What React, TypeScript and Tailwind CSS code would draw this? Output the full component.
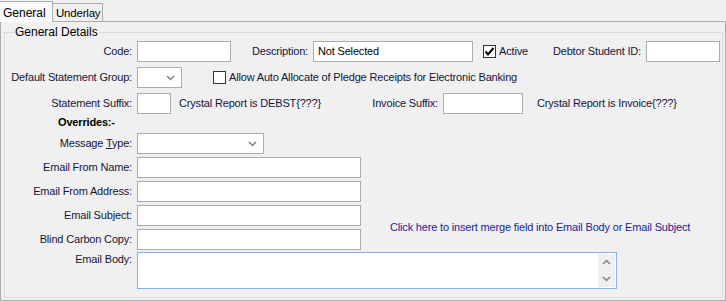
import React from 'react';

const font = { fontFamily: '"Liberation Sans", Arial, sans-serif' };

function Chevron({ className = '' }: { className?: string }) {
  return (
    <svg width="9" height="6" viewBox="0 0 9 6" className={className}>
      <polyline points="1,1 4.5,4.5 8,1" fill="none" stroke="#808080" strokeWidth="1.5" />
    </svg>
  );
}

function Label({ w, children }: { w: string; children: React.ReactNode }) {
  return <div className={`${w} shrink-0 text-right pr-[5px] text-[#14143a]`}>{children}</div>;
}

function TextBox({ w, value = '' }: { w: string; value?: string }) {
  return (
    <div className={`${w} h-[21px] shrink-0 border border-[#acacac] bg-white px-[4px] leading-[19px] text-black`}>
      {value}
    </div>
  );
}

function Select({ w }: { w: string }) {
  return (
    <div className={`${w} h-[21px] shrink-0 border border-[#acacac] bg-white flex items-center justify-end pr-[6px]`}>
      <Chevron />
    </div>
  );
}

function CheckBox({ checked }: { checked?: boolean }) {
  return (
    <div className="w-[13px] h-[13px] shrink-0 border border-[#333333] bg-white flex items-center justify-center">
      {checked && (
        <svg width="11" height="11" viewBox="0 0 11 11">
          <polyline points="1.5,5.5 4,8.5 9.5,2" fill="none" stroke="#000" strokeWidth="2" />
        </svg>
      )}
    </div>
  );
}

function Row({ children, mt }: { children: React.ReactNode; mt: string }) {
  return <div className={`flex items-center h-[21px] ${mt}`}>{children}</div>;
}

export default function App() {
  return (
    <div className="w-[726px] h-[301px] bg-[#f0f0f0] text-[11px] tracking-[-0.17px] text-[#14143a]" style={font}>
      {/* Tabs */}
      <div className="flex items-end h-[21px] tracking-normal">
        <div className="relative z-10 h-[21px] w-[53px] -mb-px border-t border-r border-[#acacac] bg-[#f9f9f9] pl-[3px] pt-[2px] text-[12px] text-black">
          General
        </div>
        <div className="h-[18px] w-[51px] -ml-px overflow-hidden whitespace-nowrap border border-b-0 border-[#acacac] bg-[#f0f0f0] pl-[3px] pt-[1px] text-[11.5px] tracking-[-0.2px] text-black">
          Underlay
        </div>
      </div>

      {/* Tab page */}
      <div className="h-[280px] border border-[#acacac] bg-[#f0f0f0] pl-[3px] pr-[2px] pt-[10px]">
        <div className="relative h-[266px] border border-[#dcdcdc]">
          <span className="absolute -top-[8px] left-[9px] bg-[#f0f0f0] px-[1px] leading-[14px] text-[12px] tracking-normal text-black">
            General Details
          </span>

          <div className="flex flex-col pt-[8px]">
            <Row mt="">
              <Label w="w-[132px]">Code:</Label>
              <TextBox w="w-[94px]" />
              <Label w="w-[82px]">Description:</Label>
              <TextBox w="w-[160px]" value="Not Selected" />
              <div className="ml-[10px]"><CheckBox checked /></div>
              <span className="ml-[3px]">Active</span>
              <div className="ml-auto flex items-center pr-[2px]">
                <Label w="w-[100px]">Debtor Student ID:</Label>
                <TextBox w="w-[74px]" />
              </div>
            </Row>

            <Row mt="mt-[5px]">
              <Label w="w-[132px]">Default Statement Group:</Label>
              <Select w="w-[45px]" />
              <div className="ml-[31px]"><CheckBox /></div>
              <span className="ml-[3px]">Allow Auto Allocate of Pledge Receipts for Electronic Banking</span>
            </Row>

            <Row mt="mt-[5px]">
              <Label w="w-[132px]">Statement Suffix:</Label>
              <TextBox w="w-[34px]" />
              <span className="ml-[8px] w-[168px] shrink-0">Crystal Report is DEBST{'{???}'}</span>
              <Label w="w-[96px]">Invoice Suffix:</Label>
              <TextBox w="w-[80px]" />
              <span className="ml-[14px]">Crystal Report is Invoice{'{???}'}</span>
            </Row>

            <div className="h-[19px] pl-[53px] pt-[1px] font-bold text-black leading-[14px]">Overrides:-</div>

            <Row mt="">
              <Label w="w-[132px]">
                Message <span className="underline">T</span>ype:
              </Label>
              <Select w="w-[127px]" />
            </Row>

            <Row mt="mt-[3px]">
              <Label w="w-[132px]">Email From Name:</Label>
              <TextBox w="w-[224px]" />
            </Row>

            <Row mt="mt-[3px]">
              <Label w="w-[132px]">Email From Address:</Label>
              <TextBox w="w-[224px]" />
            </Row>

            <div className="flex items-center mt-[3px]">
              <div className="flex flex-col">
                <Row mt="">
                  <Label w="w-[132px]">Email Subject:</Label>
                  <TextBox w="w-[224px]" />
                </Row>
                <Row mt="mt-[3px]">
                  <Label w="w-[132px]">Blind Carbon Copy:</Label>
                  <TextBox w="w-[224px]" />
                </Row>
              </div>
              <span className="ml-[29px] text-[#1c1c96] cursor-pointer">
                Click here to insert merge field into Email Body or Email Subject
              </span>
            </div>

            <div className="flex items-start mt-[2px]">
              <div className="w-[132px] shrink-0 pr-[5px] text-right leading-[14px]">Email Body:</div>
              <div className="flex h-[37px] w-[480px] border border-[#7eb4ea] bg-white">
                <div className="flex-1" />
                <div className="my-[1px] mr-[1px] flex w-[17px] flex-col items-center justify-around bg-[#f0f0f0]">
                  <Chevron className="rotate-180" />
                  <Chevron />
                </div>
              </div>
            </div>
          </div>
        </div>
      </div>
    </div>
  );
}
